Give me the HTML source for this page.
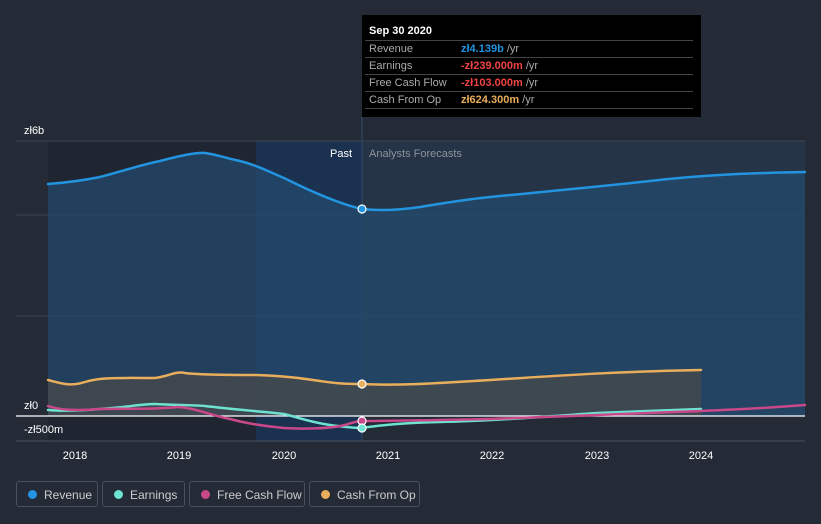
<!DOCTYPE html>
<html><head><meta charset="utf-8"><style>
body{margin:0;width:821px;height:524px;background:#242a36;font-family:"Liberation Sans",sans-serif;overflow:hidden;position:relative}
.tt{position:absolute;left:362px;top:15px;width:339px;height:102px;background:#000;color:#fff;font-size:11px}
.tt .h{position:absolute;left:7px;top:10px;font-weight:bold}
.tt .r{position:absolute;left:3px;width:328px;border-top:1px solid #444;height:16px;line-height:17px}
.tt .r span{position:absolute;left:4px;color:#aaa}
.tt .r b{position:absolute;left:96px;font-weight:bold}
.tt .r i{font-style:normal;color:#aaa;font-weight:normal}
.leg{position:absolute;top:481px;height:26px;border:1px solid #4a505c;border-radius:3px;color:#ccc;font-size:12px;line-height:26px;box-sizing:border-box}
.leg:before{content:"";position:absolute;left:11px;top:8px;width:9px;height:9px;border-radius:50%;background:var(--c)}
.leg{padding-left:27px}
</style></head><body>
<svg width="821" height="524" style="position:absolute;left:0;top:0">
<defs>
<linearGradient id="bg" x1="0" x2="1"><stop offset="0" stop-color="#1e3a58" stop-opacity="0"/><stop offset="1" stop-color="#1b3b63"/></linearGradient>
</defs>
<rect x="48" y="141" width="314" height="300" fill="#202631"/>
<rect x="256" y="141" width="106" height="300" fill="#1b3150"/>
<rect x="362" y="141" width="443" height="275" fill="#253446"/>
<g stroke="#3b4454" stroke-width="1">
<line x1="16" y1="141" x2="805" y2="141"/><line x1="16" y1="215" x2="805" y2="215"/><line x1="16" y1="316" x2="805" y2="316"/>
<line x1="16" y1="441" x2="805" y2="441" stroke="#4a505c"/>
</g>
<line x1="362" y1="117" x2="362" y2="441" stroke="#2f4c70"/>
<path d="M48,184 C60,183 75,182 100,177 C120,172 140,165 160,161 C175,157 195,152 205,153 C215,154 225,158 240,161 C256,165 270,172 284,178 C310,191 340,204 362,209 C380,211 400,210 420,207 C450,202 470,199 490,197 C540,192 597,187 650,181 C701,175 750,173 805,172 L805,416 L48,416Z" fill="#234a6e" fill-opacity="0.75"/>
<path d="M48,380 C60,383 70,387 85,382 C100,377 120,378 155,378 C170,376 175,371 185,373 C200,375 240,375 256,375 C284,376 300,378 320,381 C340,384 350,384 362,384 C400,386 440,383 490,380 C540,377 600,372 701,370 L701,416 L48,416Z" fill="#4a4a48" fill-opacity="0.7"/>
<line x1="16" y1="416" x2="805" y2="416" stroke="#fff" stroke-width="1.2"/>
<g fill="none" stroke-width="2.5" stroke-linecap="round">
<path d="M48,184 C60,183 75,182 100,177 C120,172 140,165 160,161 C175,157 195,152 205,153 C215,154 225,158 240,161 C256,165 270,172 284,178 C310,191 340,204 362,209 C380,211 400,210 420,207 C450,202 470,199 490,197 C540,192 597,187 650,181 C701,175 750,173 805,172" stroke="#2394e0"/>
<path d="M48,380 C60,383 70,387 85,382 C100,377 120,378 155,378 C170,376 175,371 185,373 C200,375 240,375 256,375 C284,376 300,378 320,381 C340,384 350,384 362,384 C400,386 440,383 490,380 C540,377 600,372 701,370" stroke="#e9ae5c"/>
<path d="M48,410 C60,411 75,411 100,409 C130,407 140,404 155,404 C175,405 190,405 205,406 C230,409 256,411 284,414 C300,418 310,422 330,425 C345,427 355,428 362,428 C380,425 400,423 440,422 C490,421 540,417 597,413 C650,411 701,409 701,409" stroke="#6ee2d0"/>
<path d="M48,406 C60,410 75,411 100,409 C130,408 150,410 178,407 C195,408 210,415 230,419 C245,423 256,425 284,428 C300,429 330,429 345,425 C352,423 356,421 362,421 C400,421 440,420 490,419 C540,417 600,415 701,411 C750,409 780,407 805,405" stroke="#c9488a"/>
</g>
<g stroke="#fff" stroke-width="1.2">
<circle cx="362" cy="209" r="4" fill="#2394e0"/>
<circle cx="362" cy="384" r="4" fill="#e9ae5c"/>
<circle cx="362" cy="421" r="4" fill="#c9488a"/>
<circle cx="362" cy="428" r="4" fill="#6ee2d0"/>
</g>
<g fill="#fff" font-size="11">
<text x="24" y="134">zł6b</text>
<text x="24" y="409">zł0</text>
<text x="24" y="433">-zł500m</text>
<text x="352" y="157" text-anchor="end">Past</text>
<text x="369" y="157" fill="#8d939c">Analysts Forecasts</text>
<g text-anchor="middle"><text x="75" y="459">2018</text><text x="179" y="459">2019</text><text x="284" y="459">2020</text><text x="388" y="459">2021</text><text x="492" y="459">2022</text><text x="597" y="459">2023</text><text x="701" y="459">2024</text></g>
</g>
</svg>
<div class="tt"><div class="h">Sep 30 2020</div>
<div class="r" style="top:25px"><span>Revenue</span><b style="color:#2394e0">zł4.139b <i>/yr</i></b></div>
<div class="r" style="top:42px"><span>Earnings</span><b style="color:#ef4343">-zł239.000m <i>/yr</i></b></div>
<div class="r" style="top:59px"><span>Free Cash Flow</span><b style="color:#ef4343">-zł103.000m <i>/yr</i></b></div>
<div class="r" style="top:76px"><span>Cash From Op</span><b style="color:#e9ae5c">zł624.300m <i>/yr</i></b></div>
<div class="r" style="top:93px;border-top:1px solid #444;height:0"></div>
</div>
<div class="leg" style="left:16px;width:82px;--c:#2394e0">Revenue</div>
<div class="leg" style="left:102px;width:83px;--c:#6ee2d0">Earnings</div>
<div class="leg" style="left:189px;width:116px;--c:#c9488a">Free Cash Flow</div>
<div class="leg" style="left:309px;width:111px;--c:#e9ae5c">Cash From Op</div>
</body></html>
